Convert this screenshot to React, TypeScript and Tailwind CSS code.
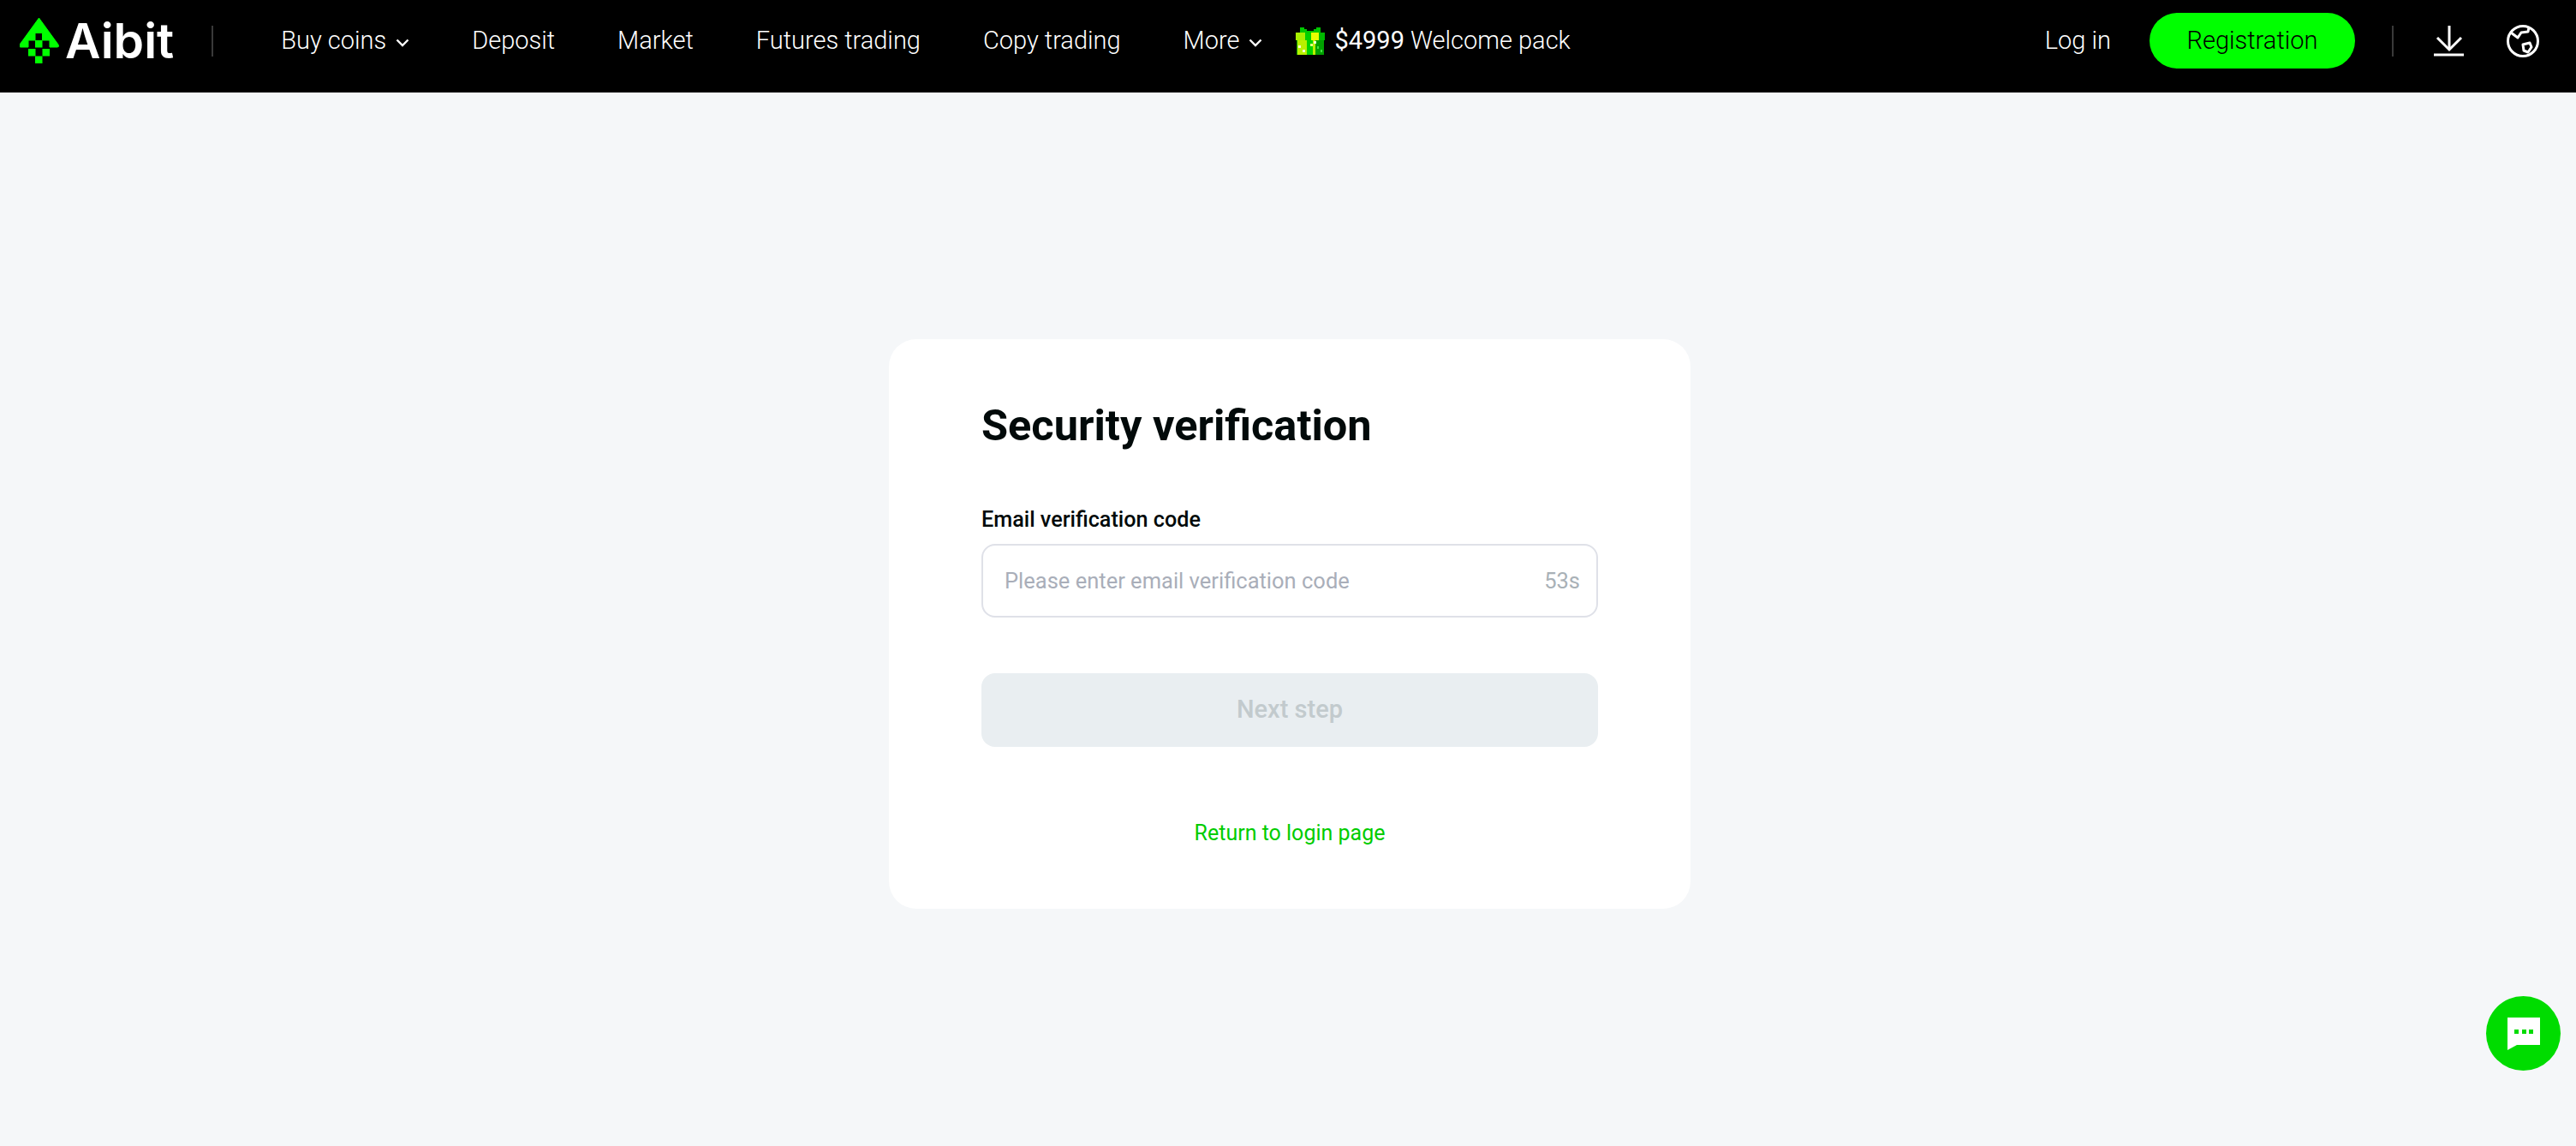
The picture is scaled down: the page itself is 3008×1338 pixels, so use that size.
const navLinks = ["Deposit", "Market", "Futures trading", "Copy trading"];

function Chevron() {
  return (
    <svg width="16" height="10" viewBox="0 0 16 10" fill="none" className="ml-[11px] mt-[4px]">
      <path d="M1.5 1.5 8 8l6.5-6.5" stroke="#fff" strokeWidth="2.4" />
    </svg>
  );
}

function Logo() {
  return (
    <svg width="48" height="56" viewBox="0 0 48 56" className="shrink-0">
      {/* arrow head with the pixel notch cut out of it */}
      <path
        d="M22.5 1 L45 32 Q46.5 35 44 35 L35 35 L35 27 L26.5 27 L26.5 18.5 L18 18.5 L18 27 L10 27 L10 35 L1 35 Q-1.5 35 0 32 Z"
        fill="#00ff00"
        stroke="#00ff00"
        strokeWidth="1"
        strokeLinejoin="round"
      />
      <rect x="18" y="27" width="8.5" height="8.5" fill="#00ff00" />
      <rect x="10" y="37" width="8.5" height="8.5" fill="#00ff00" />
      <rect x="26.5" y="37" width="8.5" height="8.5" fill="#00ff00" />
      <rect x="18" y="45.5" width="8.5" height="8.5" fill="#00ff00" />
    </svg>
  );
}

function Gift() {
  return (
    <svg width="34" height="36" viewBox="0 0 34 36" shapeRendering="crispEdges" className="shrink-0">
      <path d="M5 2h5v2h3v2h8V4h3V2h5v8H5z" fill="#00c800" />
      <rect x="0" y="8" width="34" height="9" fill="#a8f000" />
      <rect x="11" y="8" width="7" height="9" fill="#00d000" />
      <rect x="18" y="8" width="9" height="9" fill="#e8ff00" />
      <rect x="27" y="8" width="7" height="9" fill="#00b800" />
      <rect x="1" y="17" width="32" height="17" fill="#00a000" />
      <rect x="2" y="17" width="11" height="17" fill="#b8f000" />
      <rect x="13" y="17" width="7" height="17" fill="#00d400" />
      <rect x="20" y="17" width="3" height="17" fill="#b8f000" />
      <rect x="3" y="23" width="3" height="3" fill="#f4ffd0" />
      <rect x="8" y="28" width="3" height="3" fill="#f4ffd0" />
      <rect x="21" y="18" width="3" height="3" fill="#f4ffd0" />
      <rect x="17" y="21" width="3" height="3" fill="#e0ff80" />
      <rect x="25" y="24" width="2" height="3" fill="#40e040" />
      <rect x="29" y="28" width="2" height="3" fill="#40e040" />
    </svg>
  );
}

function DownloadIcon() {
  return (
    <svg width="36" height="36" viewBox="0 0 36 36" fill="none" stroke="#fff" strokeWidth="3">
      <path d="M18 0v26" />
      <path d="M4 14l14 14 14-14" />
      <path d="M0 34h35" />
    </svg>
  );
}

function GlobeIcon() {
  return (
    <svg width="38" height="38" viewBox="0 0 38 38" fill="none" stroke="#fff" strokeWidth="3" strokeLinejoin="round">
      <circle cx="19" cy="19" r="17.5" />
      <path d="M5 9l8 6 4-6 8-1 1-5" />
      <path d="M19 23l8-2 2 5-4 6-5-2z" />
    </svg>
  );
}

function Header() {
  return (
    <header className="flex h-[108px] items-center bg-black pb-[13px] text-[29px] font-light text-white">
      <div className="flex items-center pl-[23px]">
        <Logo />
        <span className="ml-[5px] font-['Inter',sans-serif] text-[57px] font-semibold leading-none">Aibit</span>
      </div>
      <div className="ml-[44px] h-[36px] w-[2px] bg-[#3a3a3a]" />
      <nav className="ml-[79px] flex items-center gap-[73px]">
        <a className="flex items-center">
          Buy coins
          <Chevron />
        </a>
        {navLinks.map((link) => (
          <a key={link}>{link}</a>
        ))}
        <a className="flex items-center">
          More
          <Chevron />
        </a>
      </nav>
      <a className="ml-[39px] flex items-center">
        <Gift />
        <span className="ml-[11px] font-normal">$4999</span>
        <span className="ml-[7px]">Welcome pack</span>
      </a>
      <div className="ml-auto flex items-center pr-[43px]">
        <a>Log in</a>
        <button className="ml-[45px] h-[65px] w-[240px] rounded-full bg-[#00ff00] text-black">Registration</button>
        <div className="ml-[43px] h-[36px] w-[2px] bg-[#3a3a3a]" />
        <div className="ml-[47px]">
          <DownloadIcon />
        </div>
        <div className="ml-[49px]">
          <GlobeIcon />
        </div>
      </div>
    </header>
  );
}

export default function App() {
  return (
    <div className="relative h-[1338px] overflow-hidden bg-[#f5f7f9] font-['Roboto',sans-serif]">
      <Header />
      <main className="flex justify-center pl-[4px] pt-[288px]">
        <div className="h-[665px] w-[936px] rounded-[32px] bg-white px-[108px] pt-[68px]">
          <h1 className="text-[50.5px] font-bold leading-[66px] text-[#020a0a]">Security verification</h1>
          <label className="mt-[62px] block text-[25.2px] font-medium leading-[30px] text-[#020a0a]">Email verification code</label>
          <div className="mt-[13px] flex h-[86px] items-center justify-between rounded-[16px] border-2 border-[#dfe1e8] pl-[25px] pr-[19px] text-[25.5px]">
            <span className="text-[#a9aeb9]">Please enter email verification code</span>
            <span className="text-[#a9b1b7]">53s</span>
          </div>
          <button className="mt-[65px] h-[86px] w-full rounded-[16px] bg-[#e9eef1] text-[29px] font-medium text-[#c2cacd]">Next step</button>
          <div className="mt-[86px] text-center">
            <a className="text-[25px] leading-[30px] text-[#00cc00]">Return to login page</a>
          </div>
        </div>
      </main>
      {/* floating support button */}
      <button className="absolute left-[2903px] top-[1163px] flex h-[87px] w-[87px] items-center justify-center rounded-full bg-[#00dc00]">
        <svg width="38" height="38" viewBox="0 0 38 38">
          <path d="M0 0h38v32H11L0 38z" fill="#fff" />
          <rect x="8" y="14" width="5" height="5" fill="#00dc00" />
          <rect x="17" y="14" width="5" height="5" fill="#00dc00" />
          <rect x="25" y="14" width="5" height="5" fill="#00dc00" />
        </svg>
      </button>
    </div>
  );
}
